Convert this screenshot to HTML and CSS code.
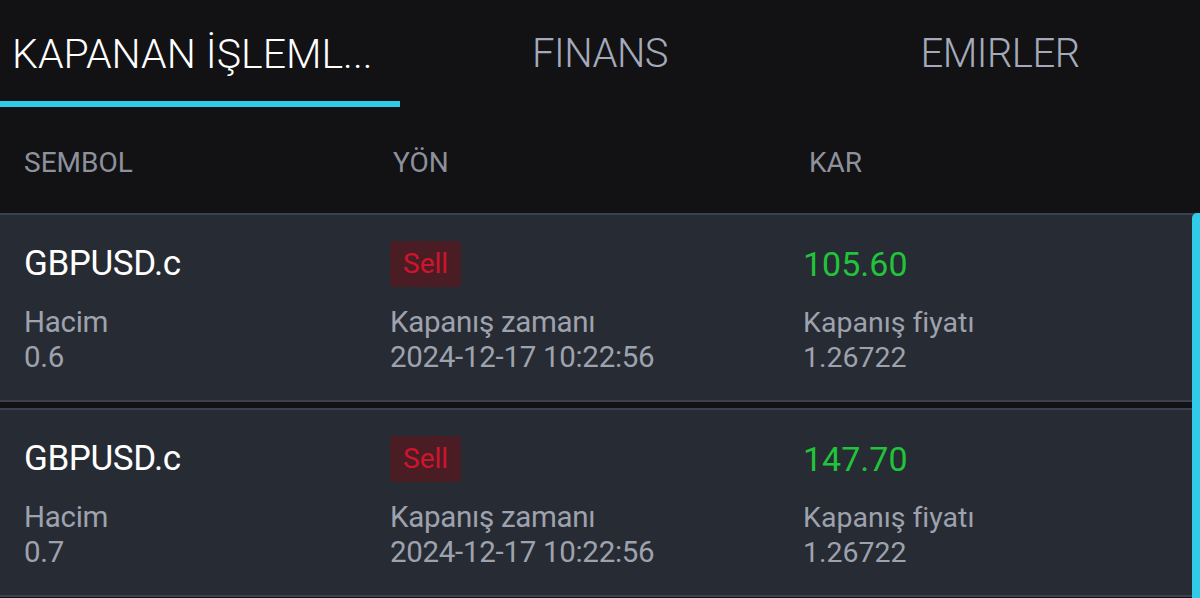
FILE: index.html
```html
<!DOCTYPE html>
<html lang="tr">
<head>
    <meta charset="UTF-8">
    <meta name="viewport" content="width=device-width, initial-scale=1.0">
    <title>Kapanan İşlemler</title>
    <link rel="stylesheet" href="styles.css">
</head>
<body>
    <div class="tabs">
        <div class="tab active">KAPANAN İŞLEML...</div>
        <div class="tab">FINANS</div>
        <div class="tab">EMIRLER</div>
    </div>

    <div class="head">
        <span class="head-sym">SEMBOL</span>
        <span class="head-dir">YÖN</span>
        <span class="head-pnl">KAR</span>
    </div>

    <div class="list">
        <div class="row">
            <div class="cell">
                <div class="symbol">GBPUSD.c</div>
                <div class="label">Hacim</div>
                <div class="value">0.6</div>
            </div>
            <div class="cell">
                <div class="top"><span class="badge sell">Sell</span></div>
                <div class="label">Kapanış zamanı</div>
                <div class="value">2024-12-17 10:22:56</div>
            </div>
            <div class="cell alt">
                <div class="profit">105.60</div>
                <div class="label">Kapanış fiyatı</div>
                <div class="value">1.26722</div>
            </div>
        </div>
        <div class="row">
            <div class="cell">
                <div class="symbol">GBPUSD.c</div>
                <div class="label">Hacim</div>
                <div class="value">0.7</div>
            </div>
            <div class="cell">
                <div class="top"><span class="badge sell">Sell</span></div>
                <div class="label">Kapanış zamanı</div>
                <div class="value">2024-12-17 10:22:56</div>
            </div>
            <div class="cell alt">
                <div class="profit">147.70</div>
                <div class="label">Kapanış fiyatı</div>
                <div class="value">1.26722</div>
            </div>
        </div>
        <div class="scrollbar"></div>
    </div>
</body>
</html>
```

FILE: styles.css
```css
body {
    margin: 0;
    background-color: #121214;
    font-family: Roboto, "Liberation Sans", sans-serif;
    color: #9ea2ae;
    overflow: hidden;
}
.tabs {
    display: grid;
    grid-template-columns: repeat(3, 1fr);
}
.tab {
    height: 107px;
    min-width: 0;
    box-sizing: border-box;
    padding-top: 6px;
    border-bottom: 6px solid transparent;
    display: flex;
    align-items: center;
    justify-content: center;
    white-space: nowrap;
    font-size: 40px;
    font-weight: 300;
    letter-spacing: -0.5px;
    color: #a5aaba;
}
.tab.active {
    color: #ffffff;
    font-size: 41px;
    letter-spacing: 0;
    justify-content: flex-start;
    padding-left: 12px;
    border-bottom-color: #2fcbe8;
}
.head {
    height: 106px;
    box-sizing: border-box;
    padding: 4px 0 0 24px;
    display: grid;
    grid-template-columns: 369px 416px 1fr;
    align-items: center;
    font-size: 28px;
    color: #8d919c;
}
.list {
    position: relative;
}
.row {
    display: grid;
    grid-template-columns: 366px 413px 1fr;
    padding: 26px 0 25px 24px;
    background-color: #272b33;
    border-top: 2px solid #3b414d;
    border-bottom: 2px solid #3b414d;
    margin-bottom: 6px;
}
.symbol, .profit, .top {
    height: 46px;
    line-height: 46px;
    margin-bottom: 18px;
}
.symbol {
    font-size: 35px;
    color: #ffffff;
    letter-spacing: -0.4px;
}
.profit {
    font-size: 34px;
    color: #21c33b;
}
.label, .value {
    font-size: 29.5px;
    line-height: 35px;
    letter-spacing: -0.3px;
}
.cell.alt .label, .cell.alt .value {
    font-size: 28.5px;
    letter-spacing: 0;
}
.badge {
    display: inline-block;
    height: 46px;
    line-height: 46px;
    padding: 0 13px;
    border-radius: 4px;
    font-size: 28px;
}
.sell {
    background-color: #4a1d25;
    color: #d0142c;
}
.scrollbar {
    position: absolute;
    top: 0;
    right: 0;
    width: 8px;
    height: 400px;
    background-color: #2fcbe8;
    border-radius: 5px 0 0 0;
}
```
